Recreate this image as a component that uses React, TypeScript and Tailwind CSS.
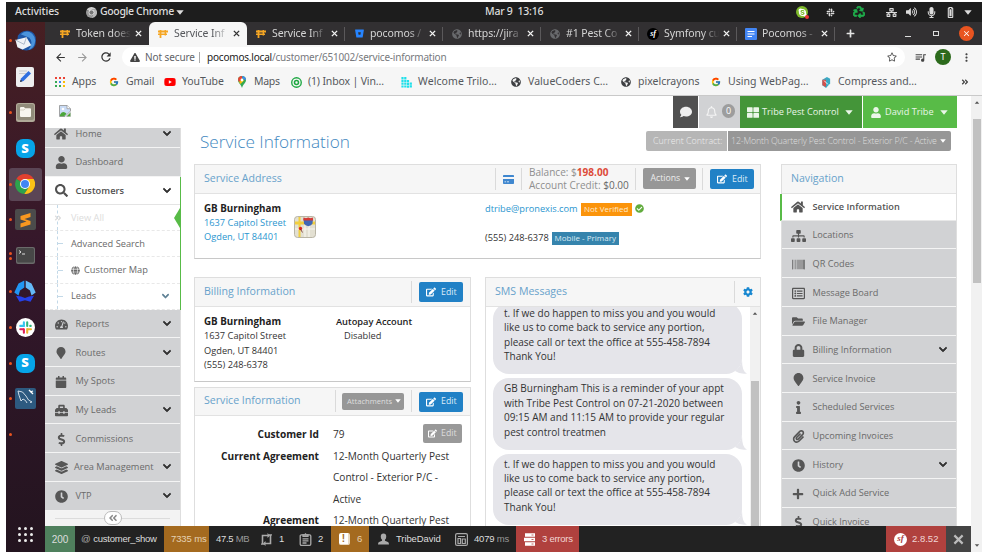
import React from "react";
import {
  FaHome, FaUser, FaSearch, FaTachometerAlt, FaMapMarker, FaCalendar, FaToolbox, FaDollarSign,
  FaLayerGroup, FaClock, FaChevronDown, FaSitemap, FaBarcode, FaRegListAlt, FaFolderOpen, FaLock,
  FaInfo, FaPaperclip, FaPlus, FaGlobe, FaEdit, FaCheckCircle, FaCog, FaRegBell,
  FaComment, FaThLarge, FaSkype, FaSlack, FaRecycle, FaNetworkWired, FaVolumeUp,
  FaMicrophone, FaBatteryFull, FaGlobeAmericas, FaYoutube, FaExclamationTriangle, FaRegStar,
  FaAngleDoubleLeft, FaAngleDoubleRight, FaBitbucket,
} from "react-icons/fa";
import { FcGoogle } from "react-icons/fc";
import { MdArrowBack, MdArrowForward, MdRefresh, MdMoreVert, MdClose, MdQueueMusic } from "react-icons/md";

type Kids = { children?: React.ReactNode; className?: string };

/* ---------- small drawings ---------- */

function Caret({ className = "" }: { className?: string }) {
  return (
    <svg viewBox="0 0 8 5" className={`shrink-0 ${className}`} fill="currentColor">
      <path d="M.3.3h7.400L4 4.700z" />
    </svg>
  );
}

function Cross({ className = "" }: { className?: string }) {
  return (
    <svg viewBox="0 0 8 8" className={`shrink-0 ${className}`} fill="none" stroke="currentColor" strokeWidth="1.600">
      <path d="m1 1 6 6M7 1 1 7" />
    </svg>
  );
}

function Chevron({ className }: { className: string }) {
  return <FaChevronDown className={`shrink-0 ${className}`} stroke="currentColor" strokeWidth={40} />;
}

function PoleIcon() {
  return (
    <svg viewBox="0 0 10 8" className="h-[8px] w-[10px]">
      <path d="M0 .5h10v2H0zM0 3.6h9v1.3H0zM1.6 0h1.8v8H1.6zM6.6 0h1.4v5.4H6.6z" fill="#f5a623" />
    </svg>
  );
}

function ChromeLogo({ gray = false, className }: { gray?: boolean; className: string }) {
  const c = gray ? ["#cfcfcf", "#9a9a9a", "#b9b9b9", "#777"] : ["#e0402f", "#2ea24c", "#fbc116", "#4285f4"];
  return (
    <svg viewBox="0 0 20 20" className={className}>
      <path d="M10 10 1.4 5A10 10 0 0 1 18.7 5H10z" fill={c[0]} />
      <path d="M10 10 1.4 5A10 10 0 0 0 9.3 20L14.3 12.5z" fill={c[1]} />
      <path d="M10 5h8.7A10 10 0 0 1 9.3 20L14.3 12.5z" fill={c[2]} />
      <circle cx="10" cy="10" r="5" fill="#fff" />
      <circle cx="10" cy="10" r="4" fill={c[3]} />
    </svg>
  );
}

function BrokenImage() {
  return (
    <svg viewBox="0 0 12 12" className="h-[12px] w-[12px]">
      <path d="M.5.5h7.500l3.500 3.200V6L6 11.500H.5z" fill="#c9dbf5" stroke="#8f8f8f" strokeWidth=".8" />
      <path d="M8 .5v3.200h3.500" fill="#fff" stroke="#8f8f8f" strokeWidth=".7" />
      <circle cx="4" cy="4" r="1.300" fill="#fff" />
      <path d="M1 11.200V9.500Q3.500 6 6 7.500l1.500 1.300-2.400 2.400z" fill="#4ba63a" />
      <path d="M7.500 11.500 11.500 7.500v4z" fill="#4ba63a" stroke="#9a9a9a" strokeWidth=".4" />
    </svg>
  );
}

function CreditCard() {
  return (
    <svg viewBox="0 0 11 9" className="mx-[7px] mt-[1px] h-[9px] w-[11px]">
      <path d="M.8 0h9.400q.8 0 .8.800V2H0V.8Q0 0 .8 0zM0 4h11v4.200q0 .8-.8.8H.8Q0 9 0 8.200z" fill="#3f87cf" />
      <path d="M1.500 6.800h1.600M4 6.800h2" stroke="#d9e8f6" strokeWidth=".9" />
    </svg>
  );
}

function MapTile() {
  return (
    <svg viewBox="0 0 22 22" className="mt-[14px] ml-[8px] h-[22px] w-[22px]">
      <rect x=".5" y=".5" width="21" height="21" rx="3" fill="#e3e0d2" stroke="#b9b5a5" />
      <path d="M1 5.500h20v3H1zM4.500 1h2v20h-2z" fill="#f2cf3f" />
      <path d="M11 9v12M15 9v12M1 13h20" stroke="#f7f5ee" strokeWidth="1.200" />
      <path d="M9.500 2.500h9.500l-.5 5q-1 2-4.200 2.700-3.200-.7-4.300-2.700z" fill="#4268b4" />
      <path d="M9.500 1.500 12 2.200l2.200-.7 2.300.7 2.300-.7.4 3H9.300z" fill="#d63a35" />
      <circle cx="6.500" cy="12.500" r="1.700" fill="#e0261d" />
      <path d="m6.500 13 2 3.500" stroke="#7a2b24" strokeWidth=".8" />
    </svg>
  );
}

function SkypeTile() {
  return (
    <div className="flex h-[19px] w-[19px] items-center justify-center rounded-[7px] bg-[#06a4e8] font-['Open_Sans',sans-serif] text-[13px] font-extrabold text-white">
      S
    </div>
  );
}

function SymfonyMark({ className }: { className: string }) {
  return (
    <span className={`flex items-center justify-center rounded-full font-['Liberation_Serif',serif] font-bold italic ${className}`}>
      sf
    </span>
  );
}

/* ---------- desktop ---------- */

function TopBar() {
  return (
    <div className="flex h-[20px] items-center bg-[#1d1d1d] text-[10.500px] font-medium text-[#dcdcdc]">
      <span className="ml-[9px] w-[71px] tracking-[-0.12px]">Activities</span>
      <ChromeLogo gray className="h-[11px] w-[11px]" />
      <span className="ml-[3px] w-[76px] tracking-[-0.35px] whitespace-nowrap">Google Chrome</span>
      <Caret className="h-[5px] w-[8px]" />
      <span className="ml-[301px] w-[311px] tracking-[-0.25px] whitespace-pre">Mar 9  13:16</span>
      <span className="relative flex h-[12px] w-[12px] items-center justify-center rounded-full bg-[#7fba2c]">
        <FaSkype className="h-[9px] w-[9px] text-white" />
        <i className="absolute -right-px -bottom-px h-[4px] w-[4px] rounded-full bg-[#e33]" />
      </span>
      <FaSlack className="ml-[18px] h-[9px] w-[9px]" />
      <FaRecycle className="ml-[18px] h-[12px] w-[12px] text-[#1fae4b]" stroke="currentColor" strokeWidth={30} />
      <FaNetworkWired className="ml-[21px] h-[11px] w-[11px]" />
      <FaVolumeUp className="ml-[9px] h-[10px] w-[11px]" />
      <FaMicrophone className="ml-[9px] h-[11px] w-[11px]" />
      <FaBatteryFull className="ml-[8px] h-[11px] w-[11px] -rotate-90" />
      <Caret className="ml-[8px] h-[5px] w-[8px]" />
    </div>
  );
}

function DockItem({ children, dots = 1, active = false }: Kids & { dots?: number; active?: boolean }) {
  return (
    <div className="flex h-[35.800px] items-center">
      <div className="flex h-[33px] w-[38px] items-center">
        <div className={`ml-[3px] flex h-[33px] w-[33px] items-center rounded-[3px] ${active ? "bg-[#5b4555]" : ""}`}>
          <div className="flex w-[3px] flex-col items-center gap-[2px]">
            {Array.from({ length: dots }, (_, i) => (
              <i key={i} className="h-[3px] w-[3px] rounded-full bg-[#e95420]" />
            ))}
          </div>
          <div className="ml-[2px] flex w-[22px] justify-center">{children}</div>
        </div>
      </div>
    </div>
  );
}

function Dock() {
  return (
    <div className="flex w-[39px] shrink-0 flex-col bg-linear-to-b from-[#471f22] via-[#34172b] via-45% to-[#23141f] pt-[1px]">
      <DockItem>
        <svg viewBox="0 0 22 22" className="h-[21px] w-[21px]">
          <path d="M3 6Q7 0 14 .8 22 2 22 11q0 10-10 10.500Q4 21.500 2 15z" fill="#1f57a6" />
          <path d="M6 4.500Q12-1 18 4q5 5 2 12-2 4-6 5 6-8 1-13z" fill="#4b94dc" />
          <path d="M.5 10.500 12 7.500l5 8.500-9 4.500-5.500-2.500z" fill="#f0f3f7" />
          <path d="m.5 10.500 9 4.500 2.500-7.500" fill="none" stroke="#a9b6c6" />
        </svg>
      </DockItem>
      <DockItem dots={0}>
        <svg viewBox="0 0 18 20" className="h-[20px] w-[18px]">
          <rect width="18" height="20" rx="2" fill="#eeeeef" />
          <path d="M3 4h8M3 6.500h7" stroke="#ccc" />
          <path d="m4 15 1-3.500L12.500 4 15 6.500 7.500 14z" fill="#2f6fe0" />
          <path d="m4 15 .7-2.300 1.700 1.600z" fill="#333" />
        </svg>
      </DockItem>
      <DockItem>
        <svg viewBox="0 0 19 19" className="h-[19px] w-[19px]">
          <rect width="19" height="19" rx="2.500" fill="#b0aa98" />
          <rect x="1" y="1" width="17" height="16" rx="2" fill="#918b7a" />
          <path d="M4 5q0-1 1-1h3l1 1.300h5q1 0 1 1V13q0 1-1 1H5q-1 0-1-1z" fill="#f7f5ee" />
          <path d="M4 7h4l1-1" fill="none" stroke="#c9c4b4" strokeWidth=".7" />
        </svg>
      </DockItem>
      <DockItem dots={0}><SkypeTile /></DockItem>
      <DockItem active><ChromeLogo className="h-[20px] w-[20px]" /></DockItem>
      <DockItem>
        <svg viewBox="0 0 21 21" className="h-[21px] w-[21px]">
          <rect width="21" height="21" rx="2" fill="#4b4b4b" />
          <path d="M15.500 4v4L9.500 10l6 2v3.500L5.500 18.500v-4l6-2-6-2V7z" fill="#f89820" />
        </svg>
      </DockItem>
      <DockItem dots={2}>
        <svg viewBox="0 0 19 17" className="h-[17px] w-[19px]">
          <rect width="19" height="17" rx="2" fill="#6a6a6a" />
          <rect x="1" y="1" width="17" height="14.500" rx="1.500" fill="#474747" />
          <path d="m3 3.500 2 1.500-2 1.500M6 7h3" fill="none" stroke="#eee" strokeWidth=".9" />
        </svg>
      </DockItem>
      <DockItem>
        <svg viewBox="0 0 22 22" className="h-[22px] w-[22px]">
          <path d="M10.300 .5v7L6 10.500l-1.500 5L.3 12.500 4.500 3.500z" fill="#2196f3" />
          <path d="M11.700 .5v7l4.300 3 1.500 5 4.200-3-4.200-9z" fill="#64b9f8" />
          <path d="m2 15.800 5 .7 4 1.500 4-1.500 5-.7-3.500 6-5.500-1.600-5.500 1.600z" fill="#2541e8" />
        </svg>
      </DockItem>
      <DockItem>
        <svg viewBox="0 0 20 20" className="h-[19px] w-[19px]">
          <circle cx="10" cy="10" r="10" fill="#fff" />
          <g strokeWidth="2.200" strokeLinecap="round">
            <path d="M8.300 4.500v4M4.500 8.300h4" stroke="#36c5f0" />
            <path d="M11.800 4.500v4M15.500 8.300h-.5" stroke="#2eb67d" />
            <path d="M11.800 15.500v-4M11.800 11.800h4" stroke="#ecb22e" />
            <path d="M8.300 15.500v-3.700M4.500 11.800h3.500" stroke="#e01e5a" />
          </g>
        </svg>
      </DockItem>
      <DockItem><SkypeTile /></DockItem>
      <DockItem>
        <svg viewBox="0 0 21 21" className="h-[21px] w-[21px]">
          <rect width="21" height="21" rx="2" fill="#2d5a80" />
          <path d="M3 3q5-.5 8 5 2 5 6 6l-2 .5M3 3q1 5 2 7l1 3 2-2q3 1 4 4" fill="none" stroke="#dfe9f2" strokeWidth=".9" />
          <path d="m14 2 4 4M15 4l3-1" stroke="#fff" strokeWidth="1.300" />
        </svg>
      </DockItem>
      <DockItem />
      <div className="mt-[74px] ml-[12px] grid w-[15px] grid-cols-3 gap-[3px]">
        {Array.from({ length: 9 }, (_, i) => (
          <i key={i} className="h-[3px] w-[3px] rounded-full bg-[#ececec]" />
        ))}
      </div>
    </div>
  );
}

/* ---------- browser ---------- */

function Tab({ icon, title, active = false, sep = true }: { icon: React.ReactNode; title: string; active?: boolean; sep?: boolean }) {
  return (
    <div
      className={`flex h-full w-[98px] shrink-0 items-center pl-[8px] ${
        active ? "rounded-t-[6px] bg-[#f6f6f6] text-[#55575b]" : "text-[#d5d5d5]"
      }`}
    >
      <span className="flex w-[12px] shrink-0 justify-center">{icon}</span>
      <span className="ml-[5px] w-[55px] mask-r-from-70% whitespace-nowrap">{title}</span>
      <Cross className={`ml-[4px] h-[7px] w-[7px] ${active ? "text-[#333]" : "text-[#f4f4f4]"}`} />
      {sep && <i className="ml-auto h-[14px] w-px bg-[#5b595b]" />}
    </div>
  );
}

function TabStrip() {
  return (
    <div className="flex h-[23px] items-center bg-[#323032] pl-[6px] text-[10.500px] tracking-[-0.1px]">
      <Tab icon={<PoleIcon />} title="Token does" sep={false} />
      <Tab icon={<PoleIcon />} title="Service Inf" active sep={false} />
      <Tab icon={<PoleIcon />} title="Service Inf" />
      <Tab icon={<FaBitbucket className="h-[9px] w-[9px] text-[#2684ff]" />} title="pocomos /" />
      <Tab icon={<FaGlobeAmericas className="h-[10px] w-[10px] text-[#68696c]" />} title="https://jira" />
      <Tab icon={<FaGlobeAmericas className="h-[10px] w-[10px] text-[#68696c]" />} title="#1 Pest Co" />
      <Tab icon={<SymfonyMark className="h-[12px] w-[12px] bg-black text-[8px] text-white" />} title="Symfony cu" />
      <Tab
        icon={
          <svg viewBox="0 0 12 12" className="h-[12px] w-[12px]">
            <rect width="12" height="12" rx="1" fill="#4285f4" />
            <path d="M2.500 3.500h7M2.500 6h7M2.500 8.500h4.500" stroke="#fff" strokeWidth="1.200" />
          </svg>
        }
        title="Pocomos -"
      />
      <FaPlus className="ml-[11px] h-[9px] w-[9px] text-[#e4e4e4]" />
      <i className="mt-[6px] ml-[50px] h-px w-[6px] bg-[#ddd]" />
      <i className="ml-[22px] h-[5px] w-[6px] border border-[#ddd]" />
      <span className="ml-[20px] flex h-[15px] w-[15px] items-center justify-center rounded-full bg-[#e95420]">
        <MdClose className="h-[9px] w-[9px] text-white" />
      </span>
    </div>
  );
}

function AddressBar() {
  return (
    <div className="flex h-[24px] items-center bg-[#f6f6f6] text-[10px] text-[#5f6368]">
      <MdArrowBack className="ml-[9px] h-[13px] w-[13px] text-[#333]" />
      <MdArrowForward className="ml-[9px] h-[13px] w-[13px] text-[#999]" />
      <MdRefresh className="ml-[10px] h-[14px] w-[14px] text-[#333]" />
      <div className="ml-[9px] flex h-[20px] w-[783px] items-center rounded-full bg-white pl-[8px]">
        <FaExclamationTriangle className="h-[9px] w-[10px] text-[#444]" />
        <span className="ml-[5px] w-[54px] tracking-[-0.1px] whitespace-nowrap">Not secure</span>
        <i className="h-[11px] w-px bg-[#aaa]" />
        <span className="ml-[7px] tracking-[-0.2px] whitespace-nowrap text-[#77797d]">
          <span className="text-[#222]">pocomos.local</span>/customer/651002/service-information
        </span>
        <FaRegStar className="mr-[8px] ml-auto h-[10px] w-[10px] text-[#555]" />
      </div>
      <MdQueueMusic className="ml-[9px] h-[13px] w-[13px] text-[#444]" />
      <span className="ml-[8px] flex h-[16px] w-[16px] items-center justify-center rounded-full bg-[#2c6a1c] text-[9px] text-white">T</span>
      <MdMoreVert className="ml-[9px] h-[13px] w-[13px] text-[#444]" />
    </div>
  );
}

function Bookmark({ icon, children, className }: Kids & { icon: React.ReactNode }) {
  return (
    <span className={`flex shrink-0 items-center whitespace-nowrap ${className}`}>
      <span className="mr-[6px] flex w-[12px] shrink-0 justify-center">{icon}</span>
      {children}
    </span>
  );
}

const APP_DOTS = [
  "bg-[#ea4335]", "bg-[#ea4335]", "bg-[#ea4335]",
  "bg-[#34a853]", "bg-[#4285f4]", "bg-[#fbbc05]",
  "bg-[#34a853]", "bg-[#34a853]", "bg-[#fbbc05]",
];

function BookmarksBar() {
  const globe = <FaGlobeAmericas className="h-[10px] w-[10px] text-[#3f4144]" />;
  return (
    <div className="flex h-[27px] items-center border-b border-[#c9c9c9] bg-[#f6f6f6] pl-[9px] text-[10.500px] tracking-[-0.1px] text-[#55585c]">
      <Bookmark
        className="w-[54px]"
        icon={
          <span className="grid grid-cols-3 gap-[2px]">
            {APP_DOTS.map((c, i) => <i key={i} className={`h-[2px] w-[2px] ${c}`} />)}
          </span>
        }
      >
        Apps
      </Bookmark>
      <Bookmark className="w-[56px]" icon={<FcGoogle className="h-[10px] w-[10px]" />}>Gmail</Bookmark>
      <Bookmark className="w-[72px]" icon={<FaYoutube className="h-[12px] w-[12px] text-[#f00]" />}>YouTube</Bookmark>
      <Bookmark
        className="w-[54px] tracking-[-0.3px]"
        icon={
          <svg viewBox="0 0 8 12" className="h-[12px] w-[8px]">
            <path d="M4 0a4 4 0 0 1 4 4C8 7 5 8 4 12 3 8 0 7 0 4a4 4 0 0 1 4-4z" fill="#34a853" />
            <path d="M1 1.300Q2.400-.2 4 0L4 4 1 6Q-.8 3.500 1 1.300z" fill="#ea4335" />
            <path d="M4 0q4 .4 4 4L5 3z" fill="#4285f4" />
            <path d="M1 6 4 3.500l2 1L2.500 8z" fill="#fbbc05" />
            <circle cx="4" cy="4" r="1.400" fill="#fff" />
          </svg>
        }
      >
        Maps
      </Bookmark>
      <Bookmark
        className="w-[110px] tracking-[-0.15px]"
        icon={
          <svg viewBox="0 0 12 12" className="h-[11px] w-[11px]" fill="none" stroke="#1fa843">
            <circle cx="6" cy="6" r="5.200" strokeWidth="1.500" />
            <circle cx="6" cy="6" r="2.200" strokeWidth="1.700" />
          </svg>
        }
      >
        (1) Inbox | Vin…
      </Bookmark>
      <Bookmark
        className="w-[110px] tracking-[0.08px]"
        icon={
          <svg viewBox="0 0 11 11" className="h-[11px] w-[11px]" stroke="#1fe0ea" strokeWidth="2.200" strokeDasharray="2.200 .6">
            <path d="M1.500 0v11M4.300 0v11M7 3v8M9.800 5.500V11" />
          </svg>
        }
      >
        Welcome Trilo…
      </Bookmark>
      <Bookmark className="w-[110px] tracking-[0.05px]" icon={globe}>ValueCoders C…</Bookmark>
      <Bookmark className="w-[90px] tracking-[0px]" icon={globe}>pixelcrayons</Bookmark>
      <Bookmark className="w-[110px] tracking-[0.05px]" icon={<FcGoogle className="h-[10px] w-[10px]" />}>Using WebPag…</Bookmark>
      <Bookmark
        className="w-[133px] tracking-[-0.03px]"
        icon={
          <svg viewBox="0 0 10 12" className="h-[11px] w-[10px]">
            <path d="M1 3 6 0l3.500 2v5L5 12 1 9z" fill="#3aa9c4" />
            <path d="M1 3h4v8L1 9z" fill="#d2504c" />
            <path d="m3 4 4 4" stroke="#fff" />
          </svg>
        }
      >
        Compress and…
      </Bookmark>
      <FaAngleDoubleRight className="ml-[8px] h-[8px] w-[8px] text-[#444]" />
    </div>
  );
}

/* ---------- application ---------- */

function AppHeader() {
  return (
    <div className="flex h-[32px] shrink-0 pr-[14px] text-[9.200px] text-[#eaf6e8]">
      <div className="pt-[9px] pl-[14px]"><BrokenImage /></div>
      <div className="ml-auto flex w-[25px] items-center justify-center bg-[#505050]">
        <FaComment className="h-[12px] w-[12px] text-[#efefef]" />
      </div>
      <div className="ml-px flex w-[41px] items-center bg-[#d1d2d4] pl-[7px]">
        <FaRegBell className="h-[12px] w-[11px] text-[#f4f4f4]" />
        <span className="mb-[3px] ml-[5px] flex h-[14px] w-[13px] items-center justify-center rounded-full bg-[#9d9d9d] text-[9px] text-white">0</span>
      </div>
      <div className="flex w-[122px] items-center bg-[#449539] pl-[7px]">
        <FaThLarge className="h-[13px] w-[12px]" />
        <span className="ml-[3px] w-[83px] whitespace-nowrap">Tribe Pest Control</span>
        <Caret className="h-[5px] w-[8px]" />
      </div>
      <div className="ml-px flex w-[94px] items-center bg-[#58bb47] pl-[8px]">
        <FaUser className="h-[11px] w-[10px]" />
        <span className="ml-[4px] w-[55px] whitespace-nowrap">David Tribe</span>
        <Caret className="h-[5px] w-[8px]" />
      </div>
    </div>
  );
}

type Row = { icon: React.ReactNode; label: string; open?: boolean };

function MenuRow({ icon, label, open, tight }: Row & { tight?: boolean }) {
  return (
    <div className="flex h-[28.700px] shrink-0 items-center border-b border-[#f4f4f4] bg-[#d1d2d4] text-[#6a6a6a]">
      <span className="ml-[8px] flex w-[16px] justify-center pt-[2px] text-[#565656]">{icon}</span>
      <span className={`leading-[9px] whitespace-nowrap ${tight ? "ml-[5px]" : "ml-[6.500px]"}`}>{label}</span>
      {open && <Chevron className="mr-[9px] ml-auto h-[9px] w-[8px] text-[#333]" />}
    </div>
  );
}

const ic = "h-[13px] w-[13px]";

function SubRow({ children, className = "" }: Kids) {
  return (
    <div className={`flex h-[26.200px] items-center border-b border-dashed border-[#e8e8e8] ${className}`}>
      <i className="ml-[12px] h-full w-0 border-l border-dashed border-[#c3d9e8]" />
      {children}
    </div>
  );
}

function Sidebar() {
  const tick = <i className="mr-[8px] w-[5px] border-t border-dashed border-[#c3d9e8]" />;
  return (
    <div className="flex w-[136px] shrink-0 flex-col border-r border-[#dedede] bg-[#f3f3f3] text-[9.250px]">
      <div className="flex h-[20px] shrink-0 items-end overflow-hidden">
        <div className="w-full"><MenuRow icon={<FaHome className="h-[14px] w-[14px]" />} label="Home" open /></div>
      </div>
      <MenuRow icon={<FaUser className={ic} />} label="Dashboard" />
      <div className="relative -mr-px flex h-[133px] shrink-0 flex-col border-r-[1.500px] border-[#58bb47] bg-white text-[#6a6a6a]">
        <div className="flex h-[28.500px] shrink-0 items-center border-b border-[#e4e4e4] font-semibold text-[#505050]">
          <span className="ml-[8px] flex w-[16px] justify-center"><FaSearch className="h-[13px] w-[13px]" /></span>
          <span className="ml-[6.500px] tracking-[0.05px]">Customers</span>
          <Chevron className="mr-[9px] ml-auto h-[9px] w-[8px] text-[#333]" />
        </div>
        <SubRow className="text-[#dcdcdc]">
          <FaAngleDoubleRight className="-ml-[4px] h-[8px] w-[8px]" />
          <span className="ml-[9px]">View All</span>
        </SubRow>
        <SubRow>{tick}Advanced Search</SubRow>
        <SubRow>{tick}<FaGlobe className="mr-[4px] h-[9px] w-[9px]" />Customer Map</SubRow>
        <SubRow>
          {tick}Leads
          <Chevron className="mr-[11px] ml-auto h-[8px] w-[7px] text-[#5c7f93]" />
        </SubRow>
        <svg viewBox="0 0 6 20" className="absolute top-[31px] right-0 h-[20px] w-[6px]">
          <path d="M6 0v20L0 10z" fill="#58bb47" />
        </svg>
      </div>
      <MenuRow icon={<FaTachometerAlt className={ic} />} label="Reports" open />
      <MenuRow icon={<FaMapMarker className="h-[12px] w-[12px]" />} label="Routes" open />
      <MenuRow icon={<FaCalendar className="h-[12px] w-[12px]" />} label="My Spots" />
      <MenuRow icon={<FaToolbox className={ic} />} label="My Leads" open />
      <MenuRow icon={<FaDollarSign className={ic} />} label="Commissions" />
      <MenuRow icon={<FaLayerGroup className={ic} />} label="Area Management" open tight />
      <MenuRow icon={<FaClock className={ic} />} label="VTP" open />
      <div className="flex h-[18px] items-center px-[10px]">
        <i className="h-px flex-1 bg-[#dcdcdc]" />
        <span className="flex h-[14px] w-[18px] items-center justify-center rounded-full border border-[#bbb] bg-white">
          <FaAngleDoubleLeft className="h-[10px] w-[10px] text-[#888]" />
        </span>
        <i className="h-px flex-1 bg-[#dcdcdc]" />
      </div>
    </div>
  );
}

function Panel({ children, className = "" }: Kids) {
  return <div className={`flex flex-col border border-b-[1.500px] border-[#dedede] border-b-[#c8c8c8] bg-white ${className}`}>{children}</div>;
}

function PanelHead({ title, children }: Kids & { title: string }) {
  return (
    <div className="flex h-[28.500px] shrink-0 items-center border-b border-[#e2e2e2] bg-[#f6f6f6]">
      <span className="ml-[9px] text-[10.600px] whitespace-nowrap text-[#68a2cb]">{title}</span>
      <div className="ml-auto flex items-center">{children}</div>
    </div>
  );
}

const Sep = ({ className = "" }: Kids) => <i className={`h-[22px] w-px bg-[#dadada] ${className}`} />;

function EditButton({ className = "" }: Kids) {
  return (
    <span className={`mt-px flex h-[20px] w-[44px] items-center rounded-[2px] bg-[#2181c6] pl-[7px] text-[8.800px] text-[#dcecf8] ${className}`}>
      <FaEdit className="mr-[5px] h-[10px] w-[10px] text-white" />
      Edit
    </span>
  );
}

function ServiceAddress() {
  return (
    <Panel className="h-[95px]">
      <PanelHead title="Service Address">
        <Sep />
        <CreditCard />
        <Sep />
        <div className="ml-[7px] w-[106px] text-[10.050px] leading-[12.300px] whitespace-nowrap text-[#8f8f8f]">
          <div>Balance: $<b className="font-bold text-[#dd4b39]">198.00</b></div>
          <div>Account Credit: <span className="text-[#666]">$0.00</span></div>
        </div>
        <Sep />
        <span className="mx-[6.500px] flex h-[21px] w-[53px] items-center rounded-[2px] bg-[#979797] pl-[8px] text-[8.700px] text-[#ececec]">
          Actions
          <Caret className="ml-[4px] h-[4px] w-[6px] text-white" />
        </span>
        <Sep />
        <EditButton className="mr-[6px] ml-[7px]" />
      </PanelHead>
      <div className="flex pt-[8px] pl-[9px] text-[9.250px] leading-[14.400px]">
        <div className="w-[82px] whitespace-nowrap text-[#2a96cf]">
          <div className="text-[9.800px] font-bold text-[#222]">GB Burningham</div>
          <div>1637 Capitol Street</div>
          <div>Ogden, UT 84401</div>
        </div>
        <MapTile />
        <div className="ml-[169px] whitespace-nowrap">
          <div className="flex items-center">
            <span className="text-[#2a96cf]">dtribe@pronexis.com</span>
            <span className="mt-[1px] ml-[3px] flex h-[13px] w-[51px] items-center justify-center bg-[#fb940b] text-[8px] text-[#ffeacb]">Not Verified</span>
            <FaCheckCircle className="ml-[3px] h-[9px] w-[9px] text-[#62ac3e]" />
          </div>
          <div className="mt-[15px] flex items-center">
            <span className="text-[#333]">(555) 248-6378</span>
            <span className="mt-[1px] ml-[3px] flex h-[13px] w-[67px] items-center justify-center bg-[#3684ad] text-[8px] text-[#dcebf3]">Mobile - Primary</span>
          </div>
        </div>
      </div>
    </Panel>
  );
}

function Billing() {
  return (
    <Panel className="h-[105px]">
      <PanelHead title="Billing Information">
        <Sep />
        <EditButton className="mr-[7px] ml-[7px]" />
      </PanelHead>
      <div className="flex pt-[8.500px] pl-[9px] text-[9.250px] leading-[14.400px] whitespace-nowrap text-[#333]">
        <div className="w-[132px]">
          <div className="text-[9.800px] font-bold text-[#222]">GB Burningham</div>
          <div>1637 Capitol Street</div>
          <div>Ogden, UT 84401</div>
          <div>(555) 248-6378</div>
        </div>
        <div>
          <div className="font-semibold text-[#1c1c1c]">Autopay Account</div>
          <div className="ml-[8px]">Disabled</div>
        </div>
      </div>
    </Panel>
  );
}

function Detail({ label, children }: Kids & { label: string }) {
  return (
    <div className="flex text-[10.100px] leading-[21.500px] text-[#333]">
      <span className="w-[124px] text-right font-bold text-[#222]">{label}</span>
      <span className="ml-[14px] w-[121px]">{children}</span>
    </div>
  );
}

function ServiceInfo() {
  return (
    <Panel className="mt-[4.500px] h-[150px]">
      <PanelHead title="Service Information">
        <Sep />
        <span className="mr-[7px] ml-[6px] flex h-[17px] w-[62px] items-center rounded-[2px] bg-[#979797] pl-[5px] text-[7.600px] text-[#dedede]">
          Attachments
          <Caret className="ml-[3px] h-[4px] w-[6px] text-white" />
        </span>
        <Sep />
        <EditButton className="mr-[7px] ml-[7px]" />
      </PanelHead>
      <div className="relative pt-[8px]">
        <Detail label="Customer Id">79</Detail>
        <Detail label="Current Agreement">12-Month Quarterly Pest Control - Exterior P/C - Active</Detail>
        <Detail label="Agreement">12-Month Quarterly Pest</Detail>
        <span className="absolute top-[8px] right-[8px] flex h-[19px] w-[39px] items-center rounded-[2px] bg-[#999] pl-[5px] text-[8.800px] text-[#dcdcdc]">
          <FaEdit className="mr-[4px] h-[9px] w-[9px] text-white" />
          Edit
        </span>
      </div>
    </Panel>
  );
}

function Bubble({ lines, className = "" }: { lines: string[]; className?: string }) {
  return (
    <div className={`relative mb-[4px] h-[71.300px] w-[249px] shrink-0 rounded-[16px] bg-[#e5e5ea] pt-[3px] pl-[11px] text-[10.030px] leading-[14.400px] whitespace-nowrap text-[#333] ${className}`}>
      {lines.map((l) => <div key={l}>{l}</div>)}
      <svg viewBox="0 0 12 14" className="absolute -right-[5px] bottom-0 h-[14px] w-[12px]">
        <path d="M0 11Q5 8 7 0q0 12 5 13.500-7 1-12-2.500z" fill="#e5e5ea" />
      </svg>
    </div>
  );
}

const MISSED = [
  "t. If we do happen to miss you and you would",
  "like us to come back to service any portion,",
  "please call or text the office at 555-458-7894",
  "Thank You!",
];
const REMINDER = [
  "GB Burningham This is a reminder of your appt",
  "with Tribe Pest Control on 07-21-2020 between",
  "09:15 AM and 11:15 AM to provide your regular",
  "pest control treatmen",
];

function Messages() {
  return (
    <Panel className="h-[260px] w-[276px]">
      <PanelHead title="SMS Messages">
        <Sep />
        <FaCog className="mr-[7px] ml-[8px] h-[10px] w-[10px] text-[#1787d0]" />
      </PanelHead>
      <div className="flex h-[230px] overflow-hidden">
        <div className="flex flex-1 flex-col pl-[7px]">
          <Bubble lines={MISSED} className="-mt-[3.500px]" />
          <Bubble lines={REMINDER} />
          <Bubble lines={MISSED} />
        </div>
        <div className="flex w-[10px] flex-col items-center bg-[#f1f1f1] pt-[5px]">
          <Caret className="h-[3px] w-[6px] rotate-180 text-[#555]" />
          <i className="mt-[66px] h-[160px] w-[8px] shrink-0 bg-[#c1c1c1]" />
        </div>
      </div>
    </Panel>
  );
}

const NAV: Row[] = [
  { icon: <FaSitemap className="h-[14px] w-[15px]" />, label: "Locations" },
  { icon: <FaBarcode className={ic} />, label: "QR Codes" },
  { icon: <FaRegListAlt className={ic} />, label: "Message Board" },
  { icon: <FaFolderOpen className={ic} />, label: "File Manager" },
  { icon: <FaLock className={ic} />, label: "Billing Information", open: true },
  { icon: <FaMapMarker className={ic} />, label: "Service Invoice" },
  { icon: <FaInfo className={ic} />, label: "Scheduled Services" },
  { icon: <FaPaperclip className={ic} />, label: "Upcoming Invoices" },
  { icon: <FaClock className={ic} />, label: "History", open: true },
  { icon: <FaPlus className="h-[12px] w-[12px]" />, label: "Quick Add Service" },
  { icon: <FaDollarSign className={ic} />, label: "Quick Invoice" },
];

function Navigation() {
  return (
    <div className="w-[176px] border border-[#dedede] text-[9.200px]">
      <PanelHead title="Navigation" />
      <div className="-ml-[2px] flex h-[27.300px] items-center border-b border-l-2 border-b-[#e8e8e8] border-l-[#58bb47] bg-white font-semibold text-[#555]">
        <span className="ml-[8px] flex w-[16px] justify-center"><FaHome className="h-[14px] w-[14px] text-[#555]" /></span>
        <span className="ml-[6.500px] whitespace-nowrap">Service Information</span>
      </div>
      {NAV.map((r) => <MenuRow key={r.label} {...r} />)}
    </div>
  );
}

function TitleRow() {
  return (
    <div className="flex h-[36px] shrink-0 items-start">
      <h1 className="mt-[1px] ml-[6px] text-[17.200px] leading-[25px] font-light whitespace-nowrap text-[#3f88c0]">Service Information</h1>
      <div className="mt-[3px] mr-[20px] ml-auto flex gap-px text-[8.900px] whitespace-nowrap">
        <span className="flex h-[20px] w-[81px] items-center rounded-l-[2px] bg-[#b6b6b6] pl-[7px] font-light text-[#ededed]">Current Contract:</span>
        <span className="flex h-[20px] w-[223px] items-center rounded-r-[2px] bg-[#979797] pl-[3px] font-light tracking-[-0.19px] text-[#dedede]">
          12-Month Quarterly Pest Control - Exterior P/C - Active
          <Caret className="ml-[3px] h-[4px] w-[6px] text-white" />
        </span>
      </div>
    </div>
  );
}

function DebugBar() {
  return (
    <div className="flex h-[26px] w-[926px] shrink-0 items-center bg-[#222] font-['Liberation_Sans',Arial,sans-serif] text-[9.500px] whitespace-nowrap text-[#ddd]">
      <span className="flex h-full w-[30px] items-center justify-center bg-[#4f805d] text-[10px]">200</span>
      <span className="w-[89px] pl-[6px]"><span className="text-[#aaa]">@</span> <span className="tracking-[-0.25px]">customer_show</span></span>
      <span className="flex h-full w-[45px] items-center bg-[#a46a1f] pl-[7px] tracking-[-0.1px] whitespace-pre text-[#e6d2b4]">7335 ms</span>
      <span className="w-[51px] pl-[7px] tracking-[-0.3px]">47.5 <span className="text-[#999]">MB</span></span>
      <svg viewBox="0 0 13 13" className="h-[13px] w-[13px]" fill="none" stroke="#aaa" strokeWidth="1.600">
        <path d="M2.500 11V2.500H8M10.500 2v8.500H5" />
        <path d="M7.500 0v5L10 2.500zM5.500 8v5L3 10.500z" fill="#aaa" stroke="none" />
        <path d="M1 11.200h3M9 1.800h3" strokeWidth="1.200" />
      </svg>
      <span className="w-[26px] pl-[6px]">1</span>
      <svg viewBox="0 0 13 13" className="h-[13px] w-[13px]" fill="none" stroke="#aaa" strokeWidth="1.300">
        <rect x="1.200" y="1.800" width="10.600" height="10.500" rx="1.200" />
        <path d="M4 1.800h5v1.500H4zM6.500.2v1.500M3.500 5.800h6M3.500 7.900h6M3.500 10h4" />
      </svg>
      <span className="w-[19px] pl-[6px]">2</span>
      <span className="flex h-full w-[38px] items-center bg-[#a46a1f] pl-[8px] text-[#e6d2b4]">
        <span className="mr-[7px] flex h-[12px] w-[11px] items-center justify-center rounded-[2px] border-r-2 border-b border-[#e9d9c0] bg-white text-[10px] font-bold text-[#a46a1f]">!</span>
        6
      </span>
      <svg viewBox="0 0 12 12" className="ml-[9px] h-[12px] w-[11px]" fill="#aaa">
        <path d="M6 0Q9 0 9 3.200 9 5.500 7.600 6.800V8l3.200 1.200Q12 9.700 12 12H0q0-2.300 1.200-2.800L4.400 8V6.800Q3 5.500 3 3.200 3 0 6 0z" />
      </svg>
      <span className="w-[66px] pl-[7px] tracking-[-0.1px]">TribeDavid</span>
      <svg viewBox="0 0 13 13" className="h-[13px] w-[13px]" fill="none" stroke="#aaa" strokeWidth="1.200">
        <rect x=".6" y=".6" width="11.800" height="11.800" rx="1.500" />
        <path d="M3 3.500h7M3 5.500h2.500v5H3zM7.300 6h3v4.500h-3z" />
      </svg>
      <span className="w-[48px] pl-[6px] tracking-[-0.2px]">4079 <span className="text-[#999]">ms</span></span>
      <span className="flex h-full w-[63px] items-center bg-[#b0413e] pl-[8px] tracking-[-0.25px] text-[#f0d6d5]">
        <svg viewBox="0 0 12 13" className="mr-[6px] h-[13px] w-[12px]">
          <path d="M1 .3h10v3.500H1zM0 4.800h11v3.500H0zM1 9.300h10v3.500H1z" fill="#fff" />
          <path d="M7.500 2h2M7.500 6.500h2M7.500 11h2" stroke="#b0413e" strokeWidth=".8" />
        </svg>
        3 errors
      </span>
      <span className="ml-auto flex h-full w-[60px] items-center bg-[#b0413e] pl-[8px] text-[#f0d6d5]">
        <SymfonyMark className="mr-[5px] h-[13px] w-[13px] bg-white text-[9px] text-[#b0413e]" />2.8.52
      </span>
      <span className="flex h-full w-[25px] items-center justify-center bg-[#444]">
        <Cross className="h-[11px] w-[11px] text-[#bbb]" />
      </span>
    </div>
  );
}

export default function App() {
  return (
    <div className="h-[556px] w-[989px] overflow-hidden bg-white pt-[2px] pl-[6px]">
      <div className="flex h-[550px] w-[976px] flex-col overflow-hidden font-['Noto_Sans',sans-serif]">
        <TopBar />
        <div className="flex min-h-0 flex-1">
          <Dock />
          <div className="flex min-w-0 flex-1 flex-col">
            <TabStrip />
            <AddressBar />
            <BookmarksBar />
            <div className="flex min-h-0 flex-1 font-['Open_Sans',sans-serif]">
              <div className="flex w-[926px] shrink-0 flex-col overflow-hidden bg-white">
                <AppHeader />
                <div className="flex min-h-0 flex-1 overflow-hidden">
                  <Sidebar />
                  <div className="flex min-h-0 flex-1 flex-col pl-[13px]">
                    <TitleRow />
                    <div className="flex gap-[20px]">
                      <div className="w-[567px]">
                        <ServiceAddress />
                        <div className="mt-[18px] flex gap-[14px]">
                          <div className="w-[277px]">
                            <Billing />
                            <ServiceInfo />
                          </div>
                          <Messages />
                        </div>
                      </div>
                      <Navigation />
                    </div>
                  </div>
                </div>
                <DebugBar />
              </div>
              <div className="flex flex-1 flex-col items-center bg-[#f1f1f1] py-[5px]">
                <Caret className="h-[3px] w-[6px] rotate-180 text-[#555]" />
                <i className="mt-[15px] w-[8px] flex-[0_0_164px] bg-[#c1c1c1]" />
                <Caret className="mt-auto h-[3px] w-[6px] text-[#555]" />
              </div>
            </div>
          </div>
        </div>
      </div>
    </div>
  );
}
